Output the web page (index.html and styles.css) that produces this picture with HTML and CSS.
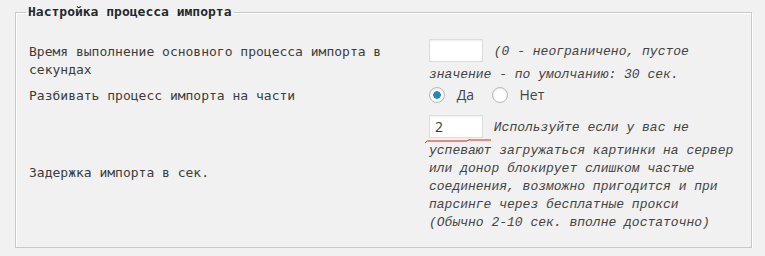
FILE: index.html
```html
<!DOCTYPE html>
<html lang="ru">
<head>
    <meta charset="UTF-8">
    <meta name="viewport" content="width=device-width, initial-scale=1.0">
    <title>Настройка процесса импорта</title>
    <link rel="stylesheet" href="styles.css">
</head>
<body>
    <fieldset class="box">
        <legend class="box-title">Настройка процесса импорта</legend>
        <table class="opts">
            <tr class="row-first">
                <td class="opt-label">Время выполнение основного процесса импорта в секундах</td>
                <td class="opt-value">
                    <input class="num" type="text" value=""> <span class="hint">(0 - неограничено, пустое значение - по умолчанию: 30 сек.</span>
                </td>
            </tr>
            <tr class="row-tight">
                <td class="opt-label">Разбивать процесс импорта на части</td>
                <td class="opt-value">
                    <label class="choice"><input type="radio" name="parts" checked> Да</label>
                    <label class="choice"><input type="radio" name="parts"> Нет</label>
                </td>
            </tr>
            <tr>
                <td class="opt-label">Задержка импорта в сек.</td>
                <td class="opt-value">
                    <input class="num" type="text" value="2"> <span class="hint">Используйте если у вас не успевают загружаться картинки на сервер или донор блокирует слишком частые соединения, возможно пригодится и при парсинге через бесплатные прокси (Обычно 2-10 сек. вполне достаточно)</span>
                    <svg class="squiggle" width="68" height="6" viewBox="0 0 68 6">
                        <path d="M0 4 Q2 1 5 2 L42 2 Q44 0 46 1 L66 1" fill="none" stroke="#d22" stroke-width="1"/>
                    </svg>
                </td>
            </tr>
        </table>
    </fieldset>
</body>
</html>
```

FILE: styles.css
```css
*{
    box-sizing: border-box;
}
body{
    margin: 0;
    background: #f1f1f1;
    color: #3c3c3c;
    font-family: "DejaVu Sans Mono", monospace;
    font-size: 13px;
    line-height: 18px;
}
.box{
    margin: 4px 13px 0 15px;
    padding: 14px 10px 11px 10px;
    border: 1px solid #c8c8c8;
    box-shadow: inset 1px 1px 0 #fff, 1px 1px 0 #fff;
    min-width: 0;
}
.box-title{
    padding: 0 2px;
    font-weight: bold;
    line-height: 16px;
    color: #23282d;
}
.opts{
    width: 100%;
    border-collapse: collapse;
}
.opts td{
    padding: 4px 0;
    vertical-align: middle;
}
.opts .row-first td{
    padding-bottom: 2px;
}
.opts .row-tight td{
    padding: 0 0 4px;
}
.opt-label{
    width: 403px;
    padding-left: 3px !important;
}
.opt-value{
    position: relative;
    font-family: "Liberation Mono", monospace;
}
.num{
    width: 54px;
    height: 23px;
    margin: 1px 3px 4px 0;
    padding: 2px 5px;
    vertical-align: middle;
    border: 1px solid #ddd;
    background: #fff;
    box-shadow: inset 0 1px 2px rgba(0,0,0,0.07);
    font-family: "Open Sans", sans-serif;
    font-size: 14px;
    color: #32373c;
    outline: none;
}
.hint{
    font-style: italic;
    color: #444;
}
.choice{
    margin-right: 10px;
    font-family: "Open Sans", sans-serif;
    font-size: 14px;
    color: #444;
}
.choice input{
    -webkit-appearance: none;
    appearance: none;
    width: 16px;
    height: 16px;
    margin: -3px 8px 0 0;
    vertical-align: middle;
    border: 1px solid #b4b9be;
    border-radius: 50%;
    background: #fff;
    box-shadow: inset 0 1px 2px rgba(0,0,0,0.1);
}
.choice input:checked{
    background: radial-gradient(circle, #1e8cbe 3.5px, #fff 4px);
}
.squiggle{
    position: absolute;
    left: -4px;
    top: 29px;
}
```
